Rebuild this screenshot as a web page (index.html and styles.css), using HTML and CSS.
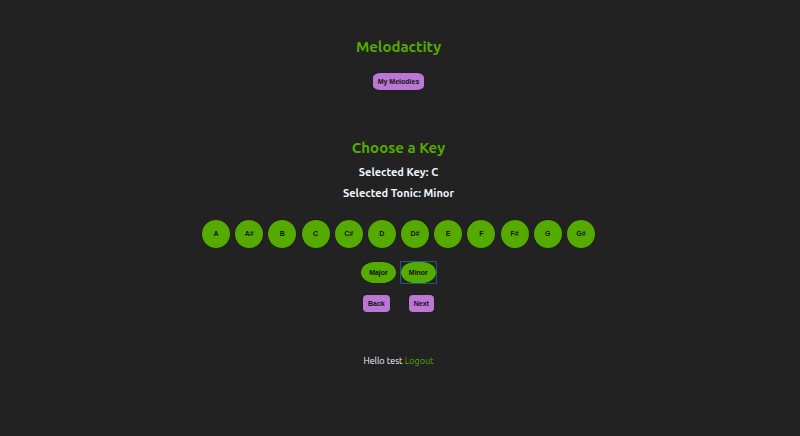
FILE: index.html
```html
<!DOCTYPE html>
<html lang="en">
<head>
<meta charset="utf-8">
<meta name="viewport" content="width=device-width, initial-scale=1">
<title>Melodactity</title>
<link rel="stylesheet" href="styles.css">
</head>
<body>
<header class="header">
  <h1 class="title">Melodactity</h1>
  <button class="button button-wide" type="button">My Melodies</button>
</header>
<main class="main">
  <h2 class="title">Choose a Key</h2>
  <h3 class="selection">Selected Key: C</h3>
  <h3 class="selection">Selected Tonic: Minor</h3>
  <div class="keys">
    <button class="key" type="button">A</button>
    <button class="key" type="button">A#</button>
    <button class="key" type="button">B</button>
    <button class="key" type="button">C</button>
    <button class="key" type="button">C#</button>
    <button class="key" type="button">D</button>
    <button class="key" type="button">D#</button>
    <button class="key" type="button">E</button>
    <button class="key" type="button">F</button>
    <button class="key" type="button">F#</button>
    <button class="key" type="button">G</button>
    <button class="key" type="button">G#</button>
  </div>
  <div class="tonics">
    <button class="tonic" type="button">Major</button>
    <button class="tonic tonic-active" type="button">Minor</button>
  </div>
  <div class="steps">
    <button class="button" type="button">Back</button>
    <button class="button" type="button">Next</button>
  </div>
</main>
<footer class="footer">Hello test <a class="logout" href="#">Logout</a></footer>
</body>
</html>
```
FILE: styles.css
```css
* {
  box-sizing: border-box;
}

body {
  margin: 0;
  padding: 37px 3px 36px 0;
  background: #222;
  color: #f0f8ff;
  font-family: Ubuntu, "Noto Sans", sans-serif;
  text-align: center;
}

.header,
.main {
  display: flex;
  flex-direction: column;
  align-items: center;
}

.title {
  margin: 0;
  color: #5a0;
  font-size: 15px;
  line-height: 20px;
}

.selection {
  margin: 7px 0 0;
  font-size: 11px;
  line-height: 14px;
}

.main {
  margin-top: 48px;
}

button {
  margin: 0;
  border: 0;
  color: #111;
  font-family: "Liberation Sans", Arial, sans-serif;
  font-size: 7px;
  font-weight: bold;
  line-height: 8px;
  cursor: pointer;
}

.button {
  padding: 5px 5px 4px;
  border-radius: 4px;
  background: #ba77d4;
  box-shadow: 0 0 1px #111;
}

.button-wide {
  margin-top: 16px;
  border-radius: 15% / 25%;
}

.keys {
  display: flex;
  justify-content: space-between;
  width: 100%;
  max-width: 393px;
  margin-top: 20px;
}

.key {
  width: 28px;
  height: 28px;
  padding: 0;
  border-radius: 50%;
  background: #5a0;
  box-shadow: 0 0 1px #111;
}

.tonics {
  display: flex;
  gap: 5px;
  margin-top: 14px;
}

.tonic {
  position: relative;
  padding: 7px 8px 6px;
  border-radius: 40% / 50%;
  background: #5a0;
  box-shadow: 0 0 1px #111;
}

.tonic-active::after {
  content: "";
  position: absolute;
  inset: -1px;
  border: 1px solid #1d5a80;
}

.steps {
  display: flex;
  gap: 19px;
  margin-top: 12px;
}

.footer {
  margin-top: 42px;
  font-size: 9px;
  line-height: 14px;
}

.logout {
  color: #5a0;
  text-decoration: none;
}
```
